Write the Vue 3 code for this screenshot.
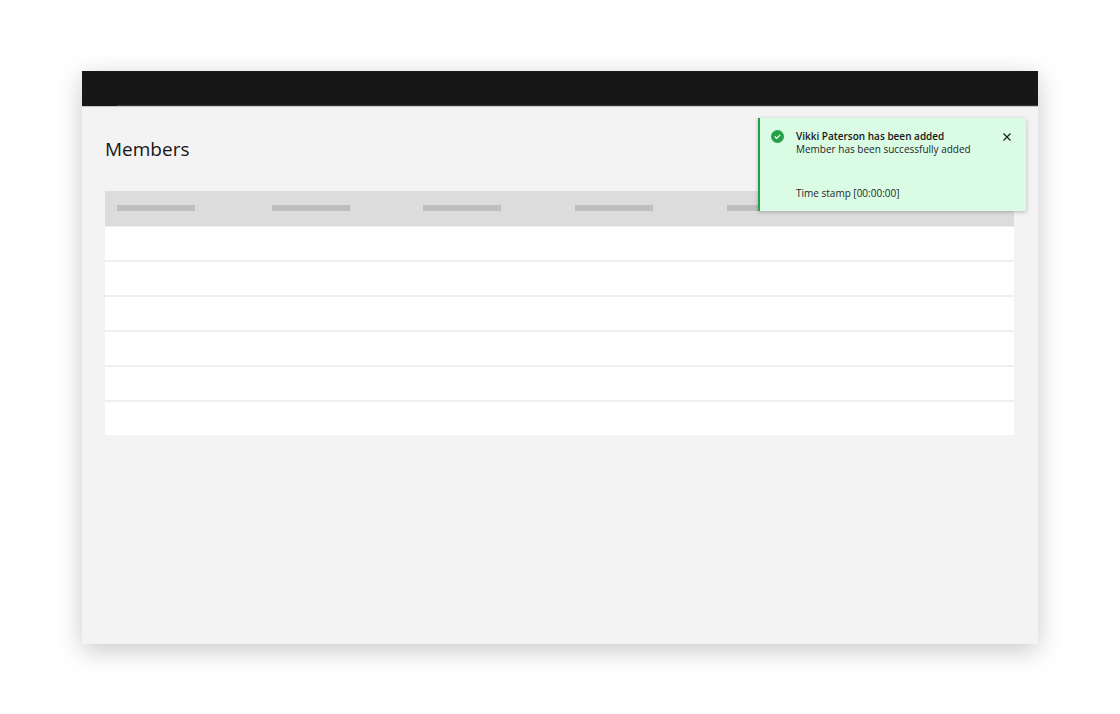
<script setup>
import { ref } from 'vue'

const columns = 6
const rows = 6
const open = ref(true)
</script>

<template>
  <div class="page">
    <div class="window">
      <header class="bar"></header>
      <main class="content">
        <h1 class="title">Members</h1>
        <table class="table" aria-label="Members">
          <colgroup>
            <col class="first" />
            <col v-for="c in columns - 2" :key="c" class="middle" />
            <col />
          </colgroup>
          <thead>
            <tr>
              <th v-for="c in columns" :key="c" scope="col"><span class="skeleton"></span></th>
            </tr>
          </thead>
          <tbody>
            <tr v-for="r in rows" :key="r">
              <td v-for="c in columns" :key="c"></td>
            </tr>
          </tbody>
        </table>
        <section v-if="open" class="toast" role="status">
          <svg class="check" viewBox="0 0 13 13" aria-hidden="true">
            <circle cx="6.5" cy="6.5" r="6.5" fill="#24a148" />
            <path d="M3.8 6.5 5.7 8.4 9.2 4.9" fill="none" stroke="#fff" stroke-width="1.2" />
          </svg>
          <div class="message">
            <h2 class="heading">Vikki Paterson has been added</h2>
            <p class="detail">Member has been successfully added</p>
            <p class="stamp">Time stamp [00:00:00]</p>
          </div>
          <button class="close" type="button" aria-label="Close" @click="open = false">
            <svg viewBox="0 0 8 8" aria-hidden="true">
              <path d="M.5.5 7.5 7.5M7.5.5.5 7.5" fill="none" stroke="#161616" stroke-width="1.1" />
            </svg>
          </button>
        </section>
      </main>
    </div>
  </div>
</template>

<style>
body {
  background: #fff;
}
</style>

<style scoped>
.page {
  box-sizing: border-box;
  display: flex;
  min-height: 100vh;
  padding: 71px 82px 70px;
  font-family: "Open Sans", "Liberation Sans", sans-serif;
  color: #161616;
}
.window {
  display: flex;
  flex: 1;
  flex-direction: column;
  background: #f3f3f3;
  box-shadow: 0 6px 24px rgba(0, 0, 0, 0.22);
}
.bar {
  display: flex;
  align-items: flex-end;
  height: 35px;
  background: #171717;
  border-bottom: 1px solid #c6c6c6;
}
.bar::after {
  content: "";
  flex: 1;
  height: 1px;
  margin-left: 35px;
  background: #393939;
}
.content {
  position: relative;
  flex: 1;
  padding: 29px 24px 24px 23px;
}
.title {
  margin: 0 0 29px;
  font-size: 19px;
  line-height: 26px;
  font-weight: 400;
}
.table {
  width: 100%;
  table-layout: fixed;
  border-collapse: separate;
  border-spacing: 0;
}
.first {
  width: 17%;
}
.middle {
  width: 16.7%;
}
.table th {
  box-sizing: border-box;
  height: 36px;
  padding: 0 0 1px 12px;
  text-align: left;
  background: #dcdcdc;
  border-bottom: 1px solid #ededed;
}
.skeleton {
  display: block;
  width: 78px;
  height: 6px;
  background: #bebebe;
}
.table td {
  box-sizing: border-box;
  height: 35px;
  padding: 0;
  background: #fff;
  border-bottom: 2px solid #efefef;
}
.table tbody tr:last-child td {
  border-bottom-color: #f3f3f3;
}
.toast {
  position: absolute;
  top: 11px;
  right: 12px;
  box-sizing: border-box;
  display: flex;
  width: 268px;
  min-height: 93px;
  padding: 12px 13px 11px 11px;
  background: #dafbe4;
  border-left: 2px solid #24a148;
  box-shadow: 0 1px 4px rgba(0, 0, 0, 0.25);
}
.check {
  flex: none;
  width: 13px;
  height: 13px;
  margin-right: 12px;
}
.message {
  flex: 1;
  font-size: 10px;
  line-height: 13px;
}
.heading {
  margin: 0;
  font-size: 10px;
  font-weight: 600;
}
.detail {
  margin: 0 0 31px;
  color: #262626;
}
.stamp {
  margin: 0;
  color: #262626;
}
.close {
  display: flex;
  align-self: flex-start;
  padding: 3px 2px;
  background: none;
  border: 0;
  cursor: pointer;
}
.close svg {
  width: 8px;
  height: 8px;
}
</style>
